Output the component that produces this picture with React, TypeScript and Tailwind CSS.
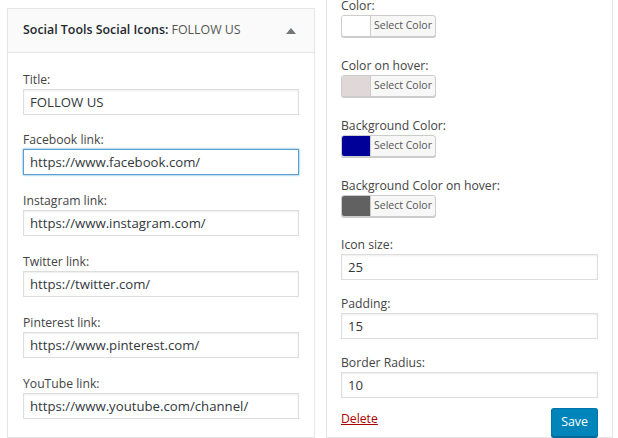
import React from "react";

const font = { fontFamily: '"Open Sans", "Noto Sans", sans-serif' };

function TextField({ label, value, focused, mt }: { label: string; value: string; focused?: boolean; mt: string }) {
  return (
    <div className={mt}>
      <div className="text-[12.2px] leading-[16px] text-[#444]">{label}</div>
      <div
        className={
          "mt-[1px] h-[26px] w-full border bg-white px-[6px] text-[13.2px] leading-[24px] text-[#32373c] " +
          (focused
            ? "border-[#5b9dd9] shadow-[0_0_2px_rgba(30,140,190,0.8)]"
            : "border-[#ddd] shadow-[inset_0_1px_2px_rgba(0,0,0,0.07)]")
        }
      >
        {value}
      </div>
    </div>
  );
}

function ColorField({ label, color, mt }: { label: string; color: string; mt: string }) {
  return (
    <div className={mt}>
      <div className="text-[12.2px] leading-[16px] text-[#444]">{label}</div>
      <div className="mt-[1px] flex h-[22px] w-[95px] overflow-hidden rounded-[3px] border border-[#ccc] bg-[#f7f7f7] shadow-[0_1px_0_#ccc]">
        <div className="h-full w-[29px] border-r border-[#ccc]" style={{ backgroundColor: color }} />
        <div className="flex flex-1 items-center justify-center text-[10.5px] text-[#555]">Select Color</div>
      </div>
    </div>
  );
}

export default function App() {
  return (
    <div className="flex h-[438px] w-[618px] overflow-hidden bg-white" style={font}>
      <div className="ml-[7px] mt-[8px] w-[308px] shrink-0 border border-[#e5e5e5] bg-white shadow-[0_1px_1px_rgba(0,0,0,0.04)]">
        <div className="flex h-[44px] items-center justify-between border-b border-[#e5e5e5] bg-[#fafafa] pl-[15px] pr-[18px]">
          <div className="text-[12.4px] font-semibold text-[#23282d]">
            Social Tools Social Icons: <span className="font-normal text-[#555]">FOLLOW US</span>
          </div>
          <div className="h-0 w-0 border-x-[5px] border-b-[6px] border-x-transparent border-b-[#72777c]" />
        </div>
        <div className="px-[15px] pt-[19px]">
          <TextField label="Title:" value="FOLLOW US" mt="mt-0" />
          <TextField label="Facebook link:" value="https://www.facebook.com/" focused mt="mt-[17px]" />
          <TextField label="Instagram link:" value="https://www.instagram.com/" mt="mt-[18px]" />
          <TextField label="Twitter link:" value="https://twitter.com/" mt="mt-[18px]" />
          <TextField label="Pinterest link:" value="https://www.pinterest.com/" mt="mt-[18px]" />
          <TextField label="YouTube link:" value="https://www.youtube.com/channel/" mt="mt-[18px]" />
        </div>
      </div>
      <div className="ml-[11px] mt-[-19px] w-[287px] shrink-0 border border-[#e5e5e5] bg-white px-[14px] pt-[16px]">
        <ColorField label="Color:" color="#ffffff" mt="mt-0" />
        <ColorField label="Color on hover:" color="#e0d8d8" mt="mt-[21px]" />
        <ColorField label="Background Color:" color="#000099" mt="mt-[21px]" />
        <ColorField label="Background Color on hover:" color="#616161" mt="mt-[21px]" />
        <TextField label="Icon size:" value="25" mt="mt-[20px]" />
        <TextField label="Padding:" value="15" mt="mt-[16px]" />
        <TextField label="Border Radius:" value="10" mt="mt-[16px]" />
        <div className="mt-[10px] flex items-start justify-between">
          <a className="mt-[2px] text-[12.2px] text-[#a00] underline">Delete</a>
          <button className="h-[29px] rounded-[3px] border border-[#0073aa] border-b-[#006799] bg-[#0085ba] px-[9px] text-[12.4px] text-white shadow-[0_1px_0_#006799]">
            Save
          </button>
        </div>
      </div>
    </div>
  );
}
